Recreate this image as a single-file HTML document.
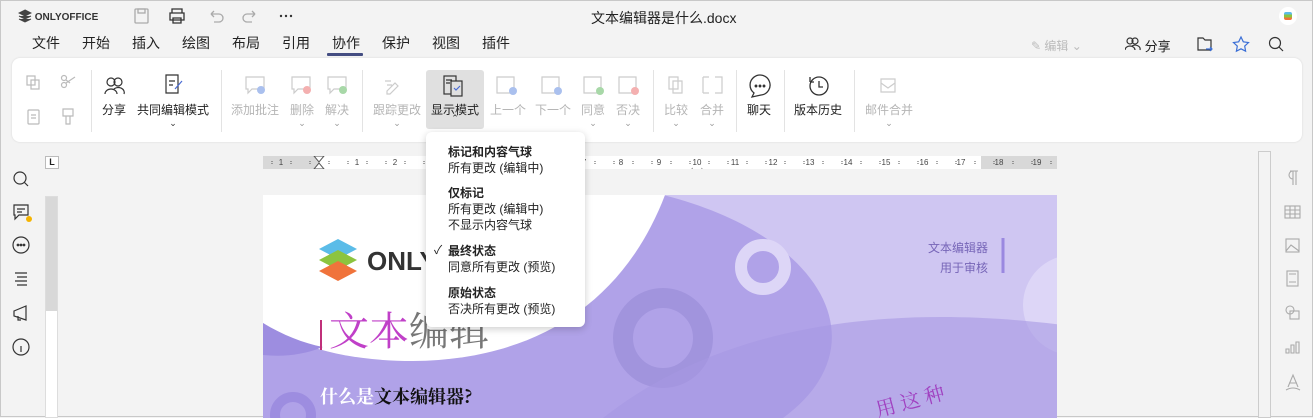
<!DOCTYPE html>
<html><head><meta charset="utf-8"><style>
*{margin:0;padding:0;box-sizing:border-box}
body{width:1313px;height:417px;overflow:hidden;background:#f3f3f3;font-family:"Liberation Sans","Noto Sans CJK SC",sans-serif;position:relative;color:#222;border:1px solid #c8c8c8}
.a{position:absolute}
.menu span{position:absolute;top:32px;font-size:14px;color:#222}
.tb{position:absolute;left:11px;top:57px;width:1290px;height:84px;background:#fff;border-radius:8px;box-shadow:0 0 2px rgba(0,0,0,.12)}
.lbl{position:absolute;top:100px;font-size:12px;transform:translateX(-50%);white-space:nowrap;color:#222}
.dis{color:#b5b5b5}
.sep{position:absolute;top:69px;width:1px;height:62px;background:#e3e3e3}
.car{position:absolute;top:117px;font-size:9px;color:#999;transform:translateX(-50%)}
.dd{position:absolute;left:425px;top:131px;width:159px;height:195px;background:#fff;border-radius:6px;box-shadow:0 2px 8px rgba(0,0,0,.2);font-size:12px;line-height:16px}
.dd b{font-weight:bold;display:block}
.dd div{position:absolute;left:22px}
.rn{position:absolute;top:0;font-size:8px;color:#444;line-height:13px;transform:translateX(-50%)}
</style></head><body>
<div class="a" style="left:17px;top:8px;font-size:10px;font-weight:bold;color:#333">
<svg width="14" height="14" style="vertical-align:-3px"><path d="M7 1l6 3-6 3-6-3z M1 7l6 3 6-3 M1 10l6 3 6-3" fill="#444" stroke="#444" stroke-width="1"/></svg> ONLYOFFICE</div>
<svg class="a" style="left:132px;top:6px" width="170" height="18" fill="none" stroke-width="1.3">
<rect x="2" y="2" width="13" height="14" rx="1" stroke="#aaa"/><rect x="5" y="2" width="7" height="4" stroke="#aaa"/>
<path d="M39 6V2h10v4M37 6h14v7H37zM40 11h8v5h-8z" stroke="#333"/>
<path d="M78 7h8a4 4 0 010 8h-5M78 7l3-3M78 7l3 3" stroke="#aaa"/>
<path d="M122 7h-8a4 4 0 000 8h5M122 7l-3-3M122 7l-3 3" stroke="#aaa"/>
<circle cx="148" cy="9" r="1.2" fill="#333"/><circle cx="153" cy="9" r="1.2" fill="#333"/><circle cx="158" cy="9" r="1.2" fill="#333"/>
</svg>
<div class="a" style="left:590px;top:7px;font-size:14px">文本编辑器是什么.docx</div>
<div class="a" style="left:1278px;top:6px;width:18px;height:18px;border-radius:9px;background:#fff"><div style="margin:5px;width:8px;height:8px;background:linear-gradient(#5bbce8 33%,#8cc43f 33% 66%,#f0733b 66%);border-radius:2px"></div></div>
<div class="menu">
<span style="left:31px">文件</span><span style="left:81px">开始</span><span style="left:131px">插入</span><span style="left:181px">绘图</span><span style="left:231px">布局</span><span style="left:281px">引用</span><span style="left:331px">协作</span><span style="left:381px">保护</span><span style="left:431px">视图</span><span style="left:481px">插件</span></div>
<div class="a" style="left:326px;top:52px;width:36px;height:3px;background:#444d82;border-radius:1px"></div>
<div class="a" style="left:1030px;top:36px;font-size:12px;color:#bbb">✎ 编辑 ⌄</div>
<div class="a" style="left:1124px;top:35px;font-size:13px"><svg width="16" height="14" fill="none" stroke="#333" stroke-width="1.2"><circle cx="5" cy="4" r="3"/><circle cx="10" cy="4" r="3"/><path d="M0 13a5 4 0 0110 0M7 9a5 4 0 018 4"/></svg> 分享</div>
<svg class="a" style="left:1195px;top:34px" width="90" height="18" fill="none" stroke-width="1.2"><path d="M2 3h5l2 2h6v10H2z" stroke="#333"/><path d="M10 14h6M14 12l2 2-2 2" stroke="#3b6fd6"/>
<path d="M45 2l2.3 4.8 5.2.7-3.8 3.6.9 5.1L45 13.8l-4.6 2.4.9-5.1-3.8-3.6 5.2-.7z" stroke="#3b6fd6"/>
<circle cx="79" cy="8" r="5.5" stroke="#333"/><path d="M83 12l4 4" stroke="#333"/></svg>
<div class="tb"></div>
<svg class="a" style="left:0;top:60px" width="960" height="80" fill="none" stroke-width="1.2">
<g stroke="#bbb"><rect x="26" y="15" width="8" height="9"/><rect x="30" y="19" width="8" height="9"/>
<circle cx="63" cy="24" r="2.5"/><circle cx="63" cy="17" r="2.5"/><path d="M65 22l9-6M65 19l4 3"/>
<rect x="27" y="49" width="11" height="14" rx="1"/><path d="M30 54h5M30 57h5"/>
<path d="M62 48h10v7h-10zM65 55h4v8h-4z"/></g>
<g stroke="#333"><circle cx="110" cy="21" r="4"/><circle cx="117" cy="21" r="4"/><path d="M104 33a6 5 0 0112 0M113 28a6 5 0 0110 5"/>
<path d="M165 14h12v18h-12z M168 20h6M168 24h4"/><path d="M181 20l-7 8" stroke="#4a6cd4"/></g>
<g stroke="#ccc"><path d="M245 16h18v12h-12l-4 4v-4h-2z"/><path d="M291 16h18v12h-12l-4 4v-4h-2z"/><path d="M327 16h18v12h-12l-4 4v-4h-2z"/>
<path d="M386 30l8-8 3 3-8 8h-3zM384 20h6M386 24h5"/>
<path d="M496 16h17v16h-17z"/><path d="M541 16h17v16h-17z"/><path d="M583 16h17v16h-17z"/><path d="M618 16h17v16h-17z"/>
<path d="M668 16h9v12h-9zM672 20h9v12h-9z"/><path d="M702 16h6M702 32h6M702 16v16M714 16h7v16h-7"/>
<path d="M880 18h14v13h-14zM880 22l7 5 7-5"/></g>
<g><circle cx="260" cy="29" r="4" fill="#aac0ee"/><circle cx="306" cy="29" r="4" fill="#f4b0b0"/><circle cx="342" cy="29" r="4" fill="#a8d8a8"/>
<circle cx="512" cy="30" r="4" fill="#aac0ee"/><circle cx="557" cy="30" r="4" fill="#aac0ee"/><circle cx="599" cy="30" r="4" fill="#a8d8a8"/><circle cx="634" cy="30" r="4" fill="#f4b0b0"/></g>
</svg>
<div class="a" style="left:425px;top:69px;width:58px;height:59px;background:#e0e0e0;border-radius:3px"></div>
<svg class="a" style="left:440px;top:72px" width="28" height="26" fill="none" stroke="#333" stroke-width="1.2"><rect x="3" y="3" width="12" height="18"/><rect x="10" y="8" width="11" height="15" fill="#e0e0e0"/><path d="M13 15l2 2 4-4" stroke="#4a6cd4"/><path d="M5 7h6M5 10h4"/></svg>
<svg class="a" style="left:740px;top:72px" width="110" height="26" fill="none" stroke="#333" stroke-width="1.3"><path d="M20 22a10 10 0 10-7-2l-2 4z"/><circle cx="15" cy="13" r=".8" fill="#333"/><circle cx="19" cy="13" r=".8" fill="#333"/><circle cx="23" cy="13" r=".8" fill="#333"/>
<circle cx="78" cy="13" r="9"/><path d="M78 8v6h4M69 9l0-5M69 9l4 0"/></svg>
<div class="lbl" style="left:113px">分享</div><div class="lbl" style="left:172px">共同编辑模式</div>
<div class="lbl dis" style="left:254px">添加批注</div><div class="lbl dis" style="left:301px">删除</div><div class="lbl dis" style="left:336px">解决</div>
<div class="lbl dis" style="left:396px">跟踪更改</div><div class="lbl" style="left:454px">显示模式</div>
<div class="lbl dis" style="left:507px">上一个</div><div class="lbl dis" style="left:552px">下一个</div><div class="lbl dis" style="left:592px">同意</div><div class="lbl dis" style="left:627px">否决</div>
<div class="lbl dis" style="left:675px">比较</div><div class="lbl dis" style="left:711px">合并</div><div class="lbl" style="left:758px">聊天</div><div class="lbl" style="left:817px">版本历史</div><div class="lbl dis" style="left:888px">邮件合并</div>
<div class="car" style="left:172px;color:#333">⌄</div><div class="car" style="left:301px">⌄</div><div class="car" style="left:336px">⌄</div><div class="car" style="left:396px">⌄</div><div class="car" style="left:454px;color:#333;top:112px">⌃</div><div class="car" style="left:592px">⌄</div><div class="car" style="left:627px">⌄</div><div class="car" style="left:675px">⌄</div><div class="car" style="left:711px">⌄</div><div class="car" style="left:888px">⌄</div>
<div class="sep" style="left:90px"></div><div class="sep" style="left:220px"></div><div class="sep" style="left:361px"></div><div class="sep" style="left:652px"></div><div class="sep" style="left:735px"></div><div class="sep" style="left:783px"></div><div class="sep" style="left:853px"></div>
<svg class="a" style="left:10px;top:168px" width="22" height="190" fill="none" stroke="#333" stroke-width="1.2">
<circle cx="9" cy="9" r="6"/><path d="M13 13l4 4"/>
<path d="M3 36h14v10H8l-4 4v-4H3zM6 40h8M6 43h5"/><circle cx="18" cy="50" r="3" fill="#f5b400" stroke="none"/>
<circle cx="10" cy="76" r="8"/><circle cx="7" cy="76" r=".8" fill="#333"/><circle cx="10" cy="76" r=".8" fill="#333"/><circle cx="13" cy="76" r=".8" fill="#333"/>
<path d="M4 104h12M6 108h10M4 112h12M6 116h10"/>
<path d="M3 142l12-5v14l-12-4zM7 147v4h3"/>
<circle cx="10" cy="178" r="8"/><path d="M10 175v0M10 177v6"/></svg>
<div class="a" style="left:44px;top:155px;width:14px;height:13px;border:1px solid #bbb;background:#fff;font-size:9px;font-weight:bold;text-align:center;line-height:11px">L</div>
<div class="a" style="left:44px;top:195px;width:13px;height:222px;background:#fff;border:1px solid #ddd"><div style="height:114px;background:#d8d8d8"></div></div>
<div class="a" style="left:262px;top:155px;width:794px;height:13px;background:#d8d8d8">
<div class="a" style="left:56px;top:0;width:662px;height:13px;background:#fff"></div>
<svg class="a" style="left:0;top:0" width="794" height="13"><g stroke="#555" stroke-width="1">
<path d="M9 5v3M28 5v3M47 5v3M66 5v3M85 5v3M104 5v3M123 5v3M142 5v3M161 5v3M180 5v3M199 5v3M218 5v3M237 5v3M256 5v3M275 5v3M294 5v3M313 5v3M332 5v3M351 5v3M370 5v3M389 5v3M408 5v3M427 5v3M446 5v3M465 5v3M484 5v3M503 5v3M522 5v3M541 5v3M560 5v3M579 5v3M598 5v3M617 5v3M636 5v3M655 5v3M674 5v3M693 5v3M712 5v3M731 5v3M750 5v3M769 5v3M788 5v3" stroke-dasharray="1 1"/></g>
<path d="M51 0h10l-5 6zM51 13h10l-5-6z" fill="#fff" stroke="#555"/><path d="M429 13h10l-5-6z" fill="#fff" stroke="#555"/></svg>
<span class="rn" style="left:18px;background:#d8d8d8">1</span>
<span class="rn" style="left:94px;background:#fff">1</span><span class="rn" style="left:132px;background:#fff">2</span><span class="rn" style="left:170px;background:#fff">3</span><span class="rn" style="left:207px;background:#fff">4</span><span class="rn" style="left:245px;background:#fff">5</span><span class="rn" style="left:283px;background:#fff">6</span><span class="rn" style="left:321px;background:#fff">7</span><span class="rn" style="left:358px;background:#fff">8</span><span class="rn" style="left:396px;background:#fff">9</span><span class="rn" style="left:434px;background:#fff">10</span><span class="rn" style="left:472px;background:#fff">11</span><span class="rn" style="left:510px;background:#fff">12</span><span class="rn" style="left:547px;background:#fff">13</span><span class="rn" style="left:585px;background:#fff">14</span><span class="rn" style="left:623px;background:#fff">15</span><span class="rn" style="left:661px;background:#fff">16</span><span class="rn" style="left:698px;background:#fff">17</span><span class="rn" style="left:736px;background:#d8d8d8">18</span><span class="rn" style="left:774px;background:#d8d8d8">19</span>
</div>
<div class="a" style="left:1257px;top:150px;width:13px;height:267px;border:1px solid #ccc;background:#f3f3f3"></div>
<svg class="a" style="left:1280px;top:168px" width="24" height="249" fill="none" stroke="#aaa" stroke-width="1.1">
<path d="M9 2h8M12 2v14M15 2v14M12 2a4 4 0 000 8"/>
<rect x="4" y="37" width="15" height="12"/><path d="M4 41h15M4 45h15M9 37v12M14 37v12"/>
<rect x="5" y="70" width="13" height="13"/><path d="M5 82l5-6 8 6"/>
<rect x="6" y="102" width="11" height="15"/><path d="M8 105h7M8 113h7"/>
<circle cx="9" cy="141" r="4"/><rect x="9" y="142" width="9" height="8"/>
<path d="M5 184v-4h3v4zM10 184v-8h3v8zM15 184v-11h3v11z"/>
<path d="M7 218l5-12 5 12M8 214h8M5 221q7-4 14 0"/></svg>
<svg class="a" style="left:262px;top:194px" width="794" height="223">
<rect width="794" height="223" fill="#b0a2e8"/>
<path d="M400 0h394v223H520C620 150 560 40 400 0z" fill="#cfc6f2"/>
<path d="M0 0h402C360 110 270 165 150 166C80 166 30 150 0 128z" fill="#fff"/>
<path d="M0 128C20 140 40 148 60 152C40 160 20 162 0 160z" fill="#9d8de0"/>
<circle cx="400" cy="143" r="40" fill="none" stroke="#a194dd" stroke-width="20"/>
<circle cx="500" cy="72" r="22" fill="none" stroke="#ddd6f7" stroke-width="12"/>
<circle cx="810" cy="110" r="50" fill="#ddd6f7"/>
<circle cx="30" cy="220" r="18" fill="none" stroke="#9d8de0" stroke-width="10"/>
<path d="M340 223C420 160 560 100 800 130V223z" fill="#a797e2" opacity=".6"/>
<path d="M740 43v35" stroke="#9a88e0" stroke-width="3"/>
<text x="725" y="57" font-size="12" fill="#7766b8" text-anchor="end" font-family="Noto Sans CJK SC,sans-serif">文本编辑器</text>
<text x="725" y="77" font-size="12" fill="#7766b8" text-anchor="end" font-family="Noto Sans CJK SC,sans-serif">用于审核</text>
<path d="M56 54l19-10 19 10-19 10z" fill="#5bbce8"/><path d="M56 65l19-10 19 10-19 10z" fill="#8cc43f"/><path d="M56 76l19-10 19 10-19 10z" fill="#f0733b"/>
<text x="104" y="75" font-size="26" font-weight="bold" fill="#333" font-family="Liberation Sans,sans-serif">ONLY</text>
<path d="M58 125v30" stroke="#c0307a" stroke-width="2"/>
<text x="66" y="150" font-size="40" fill="#c040c8" font-family="Noto Serif CJK SC,serif">文本<tspan fill="#777">编辑</tspan></text>
<text x="57" y="208" font-size="18" font-weight="bold" fill="#fff" font-family="Noto Serif CJK SC,serif">什么是<tspan fill="#111">文本编辑器?</tspan></text>
<text x="615" y="222" font-size="20" fill="#a040c0" font-family="Noto Serif CJK SC,serif" transform="rotate(-15 615 222)">用 这 种</text>
</svg>
<div class="dd">
<div style="top:12px"><b>标记和内容气球</b>所有更改 (编辑中)</div>
<div style="top:53px"><b>仅标记</b>所有更改 (编辑中)<br>不显示内容气球</div>
<div style="top:111px"><b>最终状态</b>同意所有更改 (预览)</div>
<span class="a" style="left:8px;top:110px;font-size:12px">✓</span>
<div style="top:153px"><b>原始状态</b>否决所有更改 (预览)</div>
</div>
</body></html>
